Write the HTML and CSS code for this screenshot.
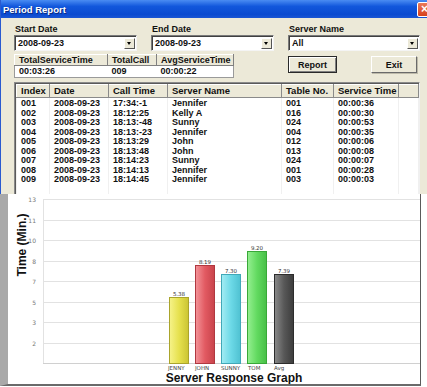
FILE: index.html
```html
<!DOCTYPE html>
<html lang="en">

<head>
    <meta charset="UTF-8">
    <title>Period Report</title>
    <link rel="stylesheet" href="styles.css">
</head>

<body>
    <!-- Report window -->
    <div class="window">
        <div class="titlebar">
            <span class="title">Period Report</span>
            <span class="close-btn">&times;</span>
        </div>

        <div class="window-body">
            <!-- Filter fields -->
            <div class="field-row">
                <div class="field">
                    <label>Start Date</label>
                    <div class="combo"><span>2008-09-23</span><span class="combo-arrow"></span></div>
                </div>
                <div class="field">
                    <label>End Date</label>
                    <div class="combo"><span>2008-09-23</span><span class="combo-arrow"></span></div>
                </div>
                <div class="field field-wide">
                    <label>Server Name</label>
                    <div class="combo"><span>All</span><span class="combo-arrow"></span></div>
                </div>
            </div>

            <!-- Totals + buttons -->
            <div class="summary-row">
                <table class="summary">
                    <tr>
                        <th class="c-total">TotalServiceTime</th>
                        <th class="c-calls">TotalCall</th>
                        <th class="c-avg">AvgServiceTime</th>
                    </tr>
                    <tr>
                        <td>00:03:26</td>
                        <td>009</td>
                        <td>00:00:22</td>
                    </tr>
                </table>
                <div class="buttons">
                    <button class="btn btn-default">Report</button>
                    <button class="btn">Exit</button>
                </div>
            </div>

            <!-- Call list -->
            <div class="list">
                <table class="calls">
                    <colgroup>
                        <col class="w-index">
                        <col class="w-date">
                        <col class="w-time">
                        <col class="w-server">
                        <col class="w-table">
                        <col class="w-service">
                        <col>
                    </colgroup>
                    <thead>
                        <tr>
                            <th>Index</th>
                            <th>Date</th>
                            <th>Call Time</th>
                            <th>Server Name</th>
                            <th>Table No.</th>
                            <th>Service Time</th>
                            <th></th>
                        </tr>
                    </thead>
                    <tbody>
                        <tr><td>001</td><td>2008-09-23</td><td>17:34:-1</td><td>Jennifer</td><td>001</td><td>00:00:36</td><td></td></tr>
                        <tr><td>002</td><td>2008-09-23</td><td>18:12:25</td><td>Kelly A</td><td>016</td><td>00:00:30</td><td></td></tr>
                        <tr><td>003</td><td>2008-09-23</td><td>18:13:-48</td><td>Sunny</td><td>024</td><td>00:00:53</td><td></td></tr>
                        <tr><td>004</td><td>2008-09-23</td><td>18:13:-23</td><td>Jennifer</td><td>004</td><td>00:00:35</td><td></td></tr>
                        <tr><td>005</td><td>2008-09-23</td><td>18:13:29</td><td>John</td><td>012</td><td>00:00:06</td><td></td></tr>
                        <tr><td>006</td><td>2008-09-23</td><td>18:13:48</td><td>John</td><td>013</td><td>00:00:08</td><td></td></tr>
                        <tr><td>007</td><td>2008-09-23</td><td>18:14:23</td><td>Sunny</td><td>024</td><td>00:00:07</td><td></td></tr>
                        <tr><td>008</td><td>2008-09-23</td><td>18:14:13</td><td>Jennifer</td><td>001</td><td>00:00:28</td><td></td></tr>
                        <tr><td>009</td><td>2008-09-23</td><td>18:14:45</td><td>Jennifer</td><td>003</td><td>00:00:03</td><td></td></tr>
                        <tr><td></td><td></td><td></td><td></td><td></td><td></td><td></td></tr>
                        <tr><td></td><td></td><td></td><td></td><td></td><td></td><td></td></tr>
                    </tbody>
                </table>
            </div>
        </div>
    </div>

    <!-- Response graph -->
    <div class="chart">
        <svg width="412" height="190" viewBox="0 0 412 190">
            <defs>
                <linearGradient id="g-yellow" x1="0" x2="1">
                    <stop offset="0" stop-color="#f6f38a" />
                    <stop offset="0.5" stop-color="#e6e14e" />
                    <stop offset="1" stop-color="#cbc433" />
                </linearGradient>
                <linearGradient id="g-red" x1="0" x2="1">
                    <stop offset="0" stop-color="#f39499" />
                    <stop offset="0.5" stop-color="#e25a62" />
                    <stop offset="1" stop-color="#c8434b" />
                </linearGradient>
                <linearGradient id="g-cyan" x1="0" x2="1">
                    <stop offset="0" stop-color="#a4ecf3" />
                    <stop offset="0.5" stop-color="#6cd9e7" />
                    <stop offset="1" stop-color="#4fc1d1" />
                </linearGradient>
                <linearGradient id="g-green" x1="0" x2="1">
                    <stop offset="0" stop-color="#95ef91" />
                    <stop offset="0.5" stop-color="#62da60" />
                    <stop offset="1" stop-color="#47bf47" />
                </linearGradient>
                <linearGradient id="g-gray" x1="0" x2="1">
                    <stop offset="0" stop-color="#8a8a8a" />
                    <stop offset="0.5" stop-color="#585858" />
                    <stop offset="1" stop-color="#3c3c3c" />
                </linearGradient>
            </defs>

            <!-- grid -->
            <g class="grid">
                <line x1="35" y1="5.5" x2="412" y2="5.5" />
                <line x1="35" y1="26.5" x2="412" y2="26.5" />
                <line x1="35" y1="46.5" x2="412" y2="46.5" />
                <line x1="35" y1="67.5" x2="412" y2="67.5" />
                <line x1="35" y1="87.5" x2="412" y2="87.5" />
                <line x1="35" y1="108.5" x2="412" y2="108.5" />
                <line x1="35" y1="128.5" x2="412" y2="128.5" />
                <line x1="35" y1="149.5" x2="412" y2="149.5" />
                <line x1="35.5" y1="5" x2="35.5" y2="169" />
            </g>
            <line class="axis" x1="35" y1="169.5" x2="412" y2="169.5" />

            <g class="tick">
                <text x="28" y="7.5">13</text>
                <text x="28" y="28.5">11</text>
                <text x="28" y="48.5">10</text>
                <text x="28" y="69.5">8</text>
                <text x="28" y="89.5">7</text>
                <text x="28" y="110.5">5</text>
                <text x="28" y="130.5">3</text>
                <text x="28" y="151.5">2</text>
            </g>

            <text class="axis-title" transform="translate(14 51) rotate(-90)">Time (Min.)</text>

            <!-- bars -->
            <rect class="bar" x="161.5" y="103.5" width="19" height="66" fill="url(#g-yellow)" stroke="#aaa42c" />
            <rect class="bar" x="187.5" y="71.5" width="19" height="98" fill="url(#g-red)" stroke="#b03840" />
            <rect class="bar" x="213.5" y="80.5" width="19" height="89" fill="url(#g-cyan)" stroke="#40a8b8" />
            <rect class="bar" x="239.5" y="57.5" width="19" height="112" fill="url(#g-green)" stroke="#38a838" />
            <rect class="bar" x="266.5" y="80.5" width="19" height="89" fill="url(#g-gray)" stroke="#2c2c2c" />

            <g class="value">
                <text x="171" y="102">5.38</text>
                <text x="197" y="70">8.19</text>
                <text x="223" y="79">7.30</text>
                <text x="249" y="56">9.20</text>
                <text x="276" y="79">7.39</text>
            </g>

            <g class="label">
                <text x="160" y="176">JENNY</text>
                <text x="187" y="176">JOHN</text>
                <text x="213" y="176">SUNNY</text>
                <text x="240" y="176">TOM</text>
                <text x="266" y="176">Avg</text>
            </g>

            <text class="chart-title" x="226" y="188">Server Response Graph</text>
        </svg>
    </div>
</body>

</html>
```

FILE: styles.css
```css
html,
body {
    margin: 0;
    padding: 0;
    overflow: hidden;
    background-color: #ffffff;
    font-family: "Liberation Sans", Arial, sans-serif;
}

/* Window frame */
.window {
    width: 440px;
    height: 194px;
    overflow: hidden;
    background-color: #ece9d8;
    border-left: 1px solid #2a5ad0;
    box-sizing: border-box;
}

.titlebar {
    height: 18px;
    display: flex;
    align-items: center;
    justify-content: space-between;
    padding: 0 0 0 2px;
    background: linear-gradient(#4a8cf2, #1257dc 35%, #0a4ad0 80%, #1a56d4);
}

.title {
    color: #ffffff;
    font-size: 9.5px;
    font-weight: bold;
    text-shadow: 1px 1px 0 #0a2a80;
}

.close-btn {
    width: 13px;
    height: 13px;
    margin-right: 8px;
    background: linear-gradient(#ea7a5a, #d6401c);
    border: 1px solid #ffffff;
    border-radius: 2px;
    color: #ffffff;
    font-size: 12px;
    font-weight: bold;
    line-height: 12px;
    text-align: center;
}

.window-body {
    padding: 6px 0 0 13px;
    font-size: 9px;
    font-weight: bold;
    color: #111111;
}

/* Filter fields */
.field-row {
    display: flex;
    gap: 14px;
}

.field {
    width: 123px;
    display: flex;
    flex-direction: column;
}

.field-wide {
    width: 132px;
}

.field label {
    height: 11px;
    line-height: 11px;
    padding-left: 1px;
}

.combo {
    height: 16px;
    display: flex;
    align-items: center;
    justify-content: space-between;
    background-color: #ffffff;
    border: 1px solid;
    border-color: #7a7a7a #f4f4f4 #f4f4f4 #7a7a7a;
    box-shadow: inset 1px 1px 0 #404040;
    box-sizing: border-box;
    padding-left: 3px;
}

.combo-arrow {
    position: relative;
    width: 11px;
    height: 11px;
    margin-right: 1px;
    background-color: #ece9d8;
    border: 1px solid;
    border-color: #ffffff #555555 #555555 #ffffff;
    box-sizing: border-box;
}

/* little black triangle on the drop button */
.combo-arrow::after {
    content: "";
    position: absolute;
    left: 2px;
    top: 3px;
    border-left: 2.5px solid transparent;
    border-right: 2.5px solid transparent;
    border-top: 3px solid #000000;
}

/* Totals row */
.summary-row {
    display: flex;
    align-items: flex-start;
    margin-top: 3px;
}

.summary {
    width: 220px;
    border-collapse: collapse;
    table-layout: fixed;
    border: 1px solid #9a9a9a;
}

.summary th {
    height: 10px;
    padding: 0 0 0 4px;
    text-align: left;
    background-color: #ece9d8;
    border: 1px solid;
    border-color: #ffffff #808080 #808080 #ffffff;
    line-height: 9px;
    white-space: nowrap;
    overflow: hidden;
}

.summary td {
    height: 11px;
    padding: 0 0 0 4px;
    background-color: #ffffff;
    line-height: 11px;
}

.c-total {
    width: 88px;
}

.c-calls {
    width: 44px;
}

.buttons {
    display: flex;
    gap: 34px;
    margin: 2px 0 0 54px;
}

.btn {
    height: 17px;
    padding: 0;
    font-family: "Liberation Sans", Arial, sans-serif;
    font-size: 9px;
    font-weight: bold;
    color: #111111;
    background-color: #ece9d8;
    border: 1px solid;
    border-color: #ffffff #6a6a6a #6a6a6a #ffffff;
    box-shadow: 1px 1px 0 #bdbaaa;
    width: 46px;
}

.btn-default {
    width: 49px;
    outline: 1px solid #2a2a2a;
    outline-offset: -1px;
    border-color: #2a2a2a;
    box-shadow: inset 1px 1px 0 #ffffff, inset -1px -1px 0 #808080;
}

/* Call list */
.list {
    width: 406px;
    margin-top: 4px;
    background-color: #ffffff;
    border: 1px solid;
    border-color: #8a8a8a #f0f0f0 #f0f0f0 #8a8a8a;
    box-shadow: inset 1px 1px 0 #5a5a5a;
    padding: 1px 0 0 1px;
    box-sizing: border-box;
    height: 120px;
}

.calls {
    width: 100%;
    border-collapse: collapse;
    table-layout: fixed;
}

.w-index {
    width: 33px;
}

.w-date {
    width: 59px;
}

.w-time {
    width: 59px;
}

.w-server {
    width: 114px;
}

.w-table {
    width: 52px;
}

.w-service {
    width: 65px;
}

.calls th {
    height: 12px;
    padding: 0 0 0 4px;
    text-align: left;
    font-size: 9.5px;
    background-color: #ece9d8;
    border: 1px solid;
    border-color: #ffffff #8a8a8a #8a8a8a #ffffff;
    line-height: 10px;
    white-space: nowrap;
    overflow: hidden;
}

.calls td {
    height: 9.5px;
    padding: 0 0 0 4px;
    line-height: 9.5px;
    border-left: 1px solid #f0f0f0;
    border-right: 1px solid #f0f0f0;
    white-space: nowrap;
}

.calls tbody tr:first-child td {
    padding-top: 1px;
}

/* Graph panel */
.chart {
    width: 421px;
    height: 192px;
    display: flex;
    background-color: #ffffff;
    border-left: 8px solid #a9a9a9;
    border-right: 1px solid #5a5a5a;
    border-bottom: 2px solid #6a6a6a;
    box-sizing: border-box;
}

.grid line {
    stroke: #e2e2e2;
    stroke-width: 1;
}

.axis {
    stroke: #d0d0d0;
    stroke-width: 1;
}

.tick text {
    font-family: "DejaVu Sans", sans-serif;
    font-size: 6px;
    fill: #777777;
    text-anchor: end;
}

.axis-title {
    font-family: "Liberation Sans", Arial, sans-serif;
    font-size: 12px;
    font-weight: bold;
    fill: #111111;
    text-anchor: middle;
    dominant-baseline: central;
}

.value text {
    font-family: "DejaVu Sans", sans-serif;
    font-size: 5.5px;
    fill: #333333;
    text-anchor: middle;
}

.label text {
    font-family: "DejaVu Sans", sans-serif;
    font-size: 5.5px;
    fill: #444444;
}

.chart-title {
    font-family: "Liberation Sans", Arial, sans-serif;
    font-size: 12px;
    font-weight: bold;
    fill: #111111;
    text-anchor: middle;
}
```
